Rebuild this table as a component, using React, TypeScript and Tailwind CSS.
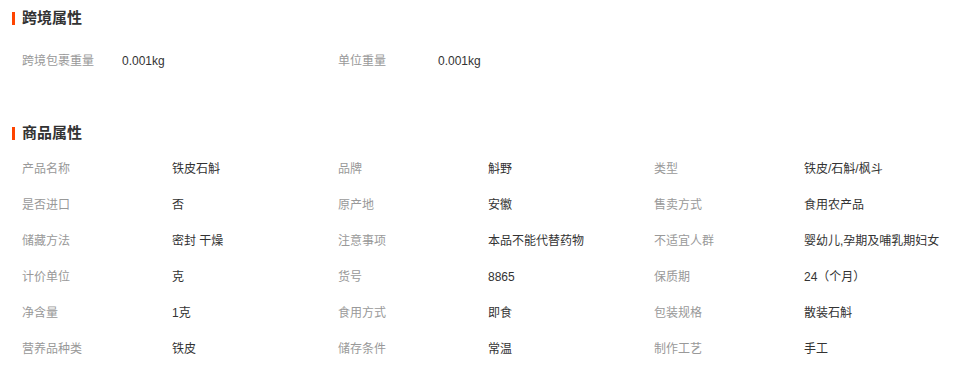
const crossBorder = [
  ["跨境包裹重量", "0.001kg"],
  ["单位重量", "0.001kg"],
];

const attrs = [
  ["产品名称", "铁皮石斛"],
  ["品牌", "斛野"],
  ["类型", "铁皮/石斛/枫斗"],
  ["是否进口", "否"],
  ["原产地", "安徽"],
  ["售卖方式", "食用农产品"],
  ["储藏方法", "密封 干燥"],
  ["注意事项", "本品不能代替药物"],
  ["不适宜人群", "婴幼儿,孕期及哺乳期妇女"],
  ["计价单位", "克"],
  ["货号", "8865"],
  ["保质期", "24（个月）"],
  ["净含量", "1克"],
  ["食用方式", "即食"],
  ["包装规格", "散装石斛"],
  ["营养品种类", "铁皮"],
  ["储存条件", "常温"],
  ["制作工艺", "手工"],
];

function Title({ text }: { text: string }) {
  return (
    <div className="flex items-center h-5 pl-3">
      <span className="w-[3px] h-[13px] bg-[#ff4400] mr-[7px]" />
      <span className="text-[15px] font-bold text-[#333]">{text}</span>
    </div>
  );
}

export default function App() {
  return (
    <div
      className="w-[978px] h-[365px] bg-white overflow-hidden pt-2"
      style={{ fontFamily: '"Liberation Sans", Arial, "Noto Sans CJK SC", sans-serif' }}
    >
      <Title text="跨境属性" />
      <div className="grid grid-cols-[316px_316px] pl-[22px] mt-[15px]">
        {crossBorder.map(([k, v]) => (
          <div key={k} className="flex items-center h-9 text-xs">
            <span className="w-[100px] text-[#999]">{k}</span>
            <span className="text-[#333]">{v}</span>
          </div>
        ))}
      </div>

      <div className="mt-[44px]">
        <Title text="商品属性" />
      </div>
      <div className="grid grid-cols-[316px_316px_316px] pl-[22px] mt-[8px]">
        {attrs.map(([k, v]) => (
          <div key={k} className="flex items-center h-9 text-xs">
            <span className="w-[150px] shrink-0 text-[#999]">{k}</span>
            <span className="text-[#333] whitespace-nowrap">{v}</span>
          </div>
        ))}
      </div>
    </div>
  );
}
